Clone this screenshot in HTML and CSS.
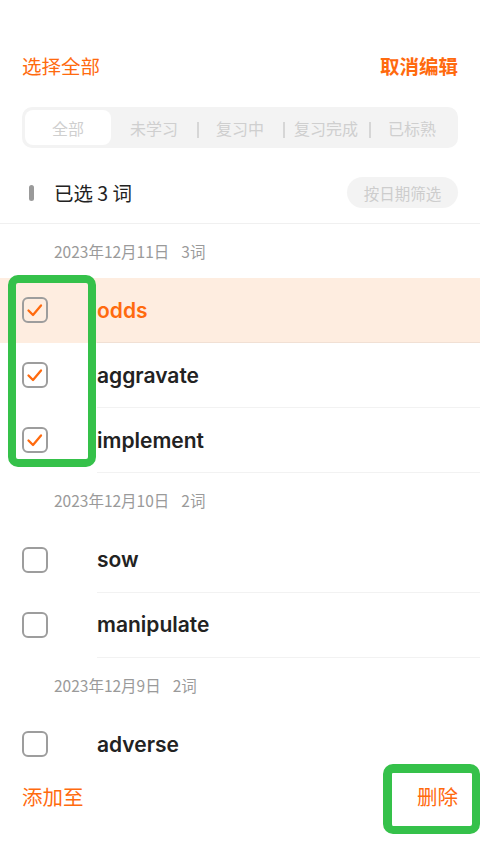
FILE: index.html
```html
<!DOCTYPE html>
<html lang="zh-CN">
<head>
<meta charset="utf-8">
<title>编辑</title>
<link rel="stylesheet" href="styles.css">
</head>
<body>
<div class="page">
  <div class="topbar">
    <span class="link">选择全部</span>
    <span class="link strong">取消编辑</span>
  </div>

  <div class="tabs">
    <div class="tab active">全部</div>
    <div class="tab">未学习</div>
    <div class="tab sep">复习中</div>
    <div class="tab sep">复习完成</div>
    <div class="tab sep">已标熟</div>
  </div>

  <div class="selbar">
    <span class="marker"></span>
    <span class="count">已选 3 词</span>
    <span class="filter">按日期筛选</span>
  </div>

  <div class="list">
    <div class="date"><span>2023年12月11日</span><span class="num">3词</span></div>
    <div class="row current">
      <span class="box checked"><svg viewBox="0 0 26 26" width="26" height="26"><polyline points="6.5,13.5 11,18 19,8.5" /></svg></span>
      <span class="word">odds</span>
    </div>
    <div class="row">
      <span class="box checked"><svg viewBox="0 0 26 26" width="26" height="26"><polyline points="6.5,13.5 11,18 19,8.5" /></svg></span>
      <span class="word">aggravate</span>
    </div>
    <div class="row">
      <span class="box checked"><svg viewBox="0 0 26 26" width="26" height="26"><polyline points="6.5,13.5 11,18 19,8.5" /></svg></span>
      <span class="word">implement</span>
    </div>

    <div class="date"><span>2023年12月10日</span><span class="num">2词</span></div>
    <div class="row">
      <span class="box"></span>
      <span class="word">sow</span>
    </div>
    <div class="row">
      <span class="box"></span>
      <span class="word">manipulate</span>
    </div>

    <div class="date"><span>2023年12月9日</span><span class="num">2词</span></div>
    <div class="row">
      <span class="box"></span>
      <span class="word">adverse</span>
    </div>
  </div>

  <div class="footer">
    <span class="link">添加至</span>
    <span class="link">删除</span>
  </div>
</div>

<div class="mark mark-checks"></div>
<div class="mark mark-delete"></div>
</body>
</html>
```

FILE: styles.css
```css
* { box-sizing: border-box; }

html, body {
  margin: 0;
  padding: 0;
  background: #ffffff;
}

body {
  width: 480px;
  height: 853px;
  overflow: hidden;
  position: relative;
  font-family: "Noto Sans CJK SC", "Noto Sans", sans-serif;
  color: #222222;
}

.page {
  height: 853px;
  display: flex;
  flex-direction: column;
}

.topbar {
  height: 40px;
  margin-top: 46px;
  padding: 0 22px;
  display: flex;
  align-items: center;
  justify-content: space-between;
}

.link {
  color: #ff6a0e;
  font-size: 19.5px;
  line-height: 26px;
}

.strong { font-weight: 700; }

.tabs {
  margin: 21px 22px 0;
  height: 41px;
  padding: 3px;
  background: #f3f3f3;
  border-radius: 10px;
  display: grid;
  grid-template-columns: repeat(5, 1fr);
}

.tab {
  position: relative;
  display: flex;
  align-items: center;
  justify-content: center;
  font-size: 16px;
  color: #cfcfcf;
  border-radius: 8px;
}

.tab.active { background: #ffffff; }

.tab.sep::before {
  content: "";
  position: absolute;
  left: 0;
  top: 12px;
  width: 1.5px;
  height: 16px;
  background: #d6d6d6;
}

.selbar {
  margin-top: 29px;
  padding: 0 22px 15px 29px;
  border-bottom: 1px solid #f0f0f0;
  display: flex;
  align-items: center;
}

.marker {
  width: 5px;
  height: 16px;
  border-radius: 3px;
  background: #9a9a9a;
}

.count {
  margin-left: 20px;
  font-size: 19.5px;
  line-height: 31px;
  color: #222222;
}

.filter {
  margin-left: auto;
  height: 31px;
  width: 111px;
  border-radius: 16px;
  background: #f3f3f3;
  color: #cdcdcd;
  font-size: 15.5px;
  display: flex;
  align-items: center;
  justify-content: center;
}

.list {
  flex: 1;
  min-height: 0;
  overflow: hidden;
}

.date {
  height: 54px;
  padding-left: 54px;
  display: flex;
  align-items: center;
  font-size: 15.5px;
  color: #9a9a9a;
}

.date .num { margin-left: 12px; }

.row + .date { height: 54.5px; }

.row {
  height: 65px;
  display: flex;
  align-items: stretch;
}

.row.current { background: #feede0; }

.box {
  width: 26px;
  height: 26px;
  margin: 19px 0 0 22px;
  border: 2px solid #9d9d9d;
  border-radius: 6px;
  position: relative;
  flex: none;
}

.box svg {
  position: absolute;
  left: -2px;
  top: -2px;
}

.box polyline {
  fill: none;
  stroke: #ff6a0e;
  stroke-width: 2.3;
  stroke-linecap: round;
  stroke-linejoin: round;
}

.word {
  flex: 1;
  margin-left: 49px;
  display: flex;
  align-items: center;
  border-bottom: 1px solid rgba(0, 0, 0, 0.05);
  font-family: Inter, "Noto Sans", sans-serif;
  font-weight: 600;
  font-size: 21px;
  color: #222222;
}

.current .word { color: #ff6a0e; }

.footer {
  height: 83px;
  padding: 14px 22px 0;
  display: flex;
  justify-content: space-between;
  align-items: flex-start;
  background: #ffffff;
}

.footer .link {
  font-size: 20.5px;
  line-height: 24px;
}

.mark {
  position: absolute;
  border: 8px solid #35c14a;
  border-radius: 10px;
}

.mark-checks {
  left: 8px;
  top: 275px;
  width: 88px;
  height: 192px;
}

.mark-delete {
  left: 383px;
  top: 764px;
  width: 97px;
  height: 70px;
  border-width: 9px 8px 8px 9px;
}
```
